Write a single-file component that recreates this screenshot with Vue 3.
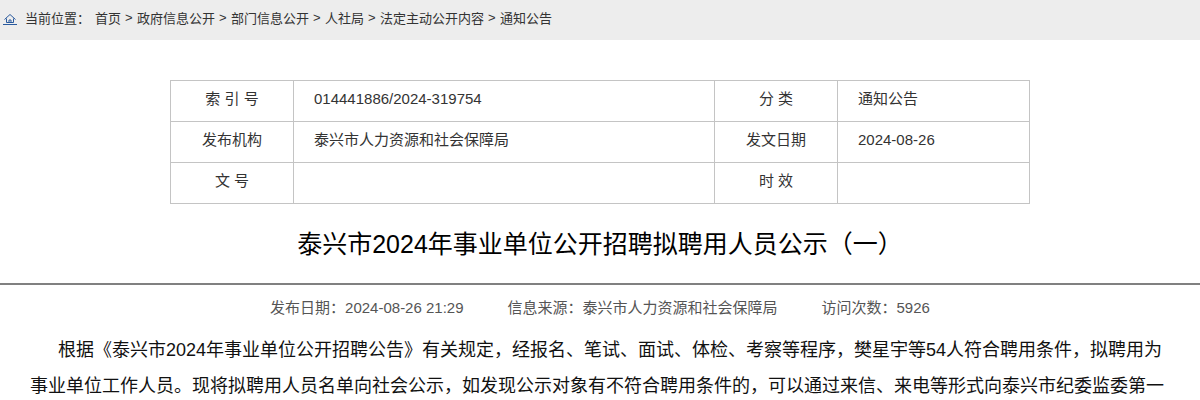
<template>
  <div class="page">
    <div class="crumb">
      <svg class="home" width="14" height="12" viewBox="0 0 14 12" fill="none" stroke="#2a5a9e" stroke-width="1">
        <path d="M1.5 6.5 7 1.5l5.5 5" />
        <path d="M3.5 5.5v4h7v-4" />
        <path d="M6 9.5V7h2v2.5" />
        <path d="M0 11.5h14" />
      </svg>
      <span class="here">当前位置：</span>
      <template v-for="(item, i) in crumbs" :key="item">
        <span v-if="i > 0" class="sep">&gt;</span>
        <span>{{ item }}</span>
      </template>
    </div>

    <div class="meta">
      <template v-for="row in metaRows" :key="row[0]">
        <div class="cell label">{{ row[0] }}</div>
        <div class="cell">{{ row[1] }}</div>
        <div class="cell label">{{ row[2] }}</div>
        <div class="cell">{{ row[3] }}</div>
      </template>
    </div>

    <h1 class="title">泰兴市2024年事业单位公开招聘拟聘用人员公示（一）</h1>

    <div class="info">
      <span>发布日期：2024-08-26 21:29</span>
      <span>信息来源：泰兴市人力资源和社会保障局</span>
      <span>访问次数：5926</span>
    </div>

    <div class="article">
      <p>根据《泰兴市2024年事业单位公开招聘公告》有关规定，经报名、笔试、面试、体检、考察等程序，樊星宇等54人符合聘用条件，拟聘用为事业单位工作人员。现将拟聘用人员名单向社会公示，如发现公示对象有不符合聘用条件的，可以通过来信、来电等形式向泰兴市纪委监委第一</p>
    </div>
  </div>
</template>

<script setup>
const crumbs = ['首页', '政府信息公开', '部门信息公开', '人社局', '法定主动公开内容', '通知公告']

const metaRows = [
  ['索 引 号', '014441886/2024-319754', '分 类', '通知公告'],
  ['发布机构', '泰兴市人力资源和社会保障局', '发文日期', '2024-08-26'],
  ['文 号', '', '时 效', '']
]
</script>

<style>
body {
  overflow: hidden;
}
</style>

<style scoped>
.page {
  width: 1200px;
  height: 400px;
  overflow: hidden;
  background: #fff;
  font-family: "Liberation Sans", "Noto Sans CJK SC", sans-serif;
  color: #333;
}

.crumb {
  display: flex;
  align-items: center;
  height: 40px;
  padding-left: 3px;
  padding-bottom: 5px;
  box-sizing: border-box;
  background: #ededed;
  font-size: 13px;
}

.home {
  margin-right: 8px;
  margin-top: 3px;
}

.here {
  margin-right: 5px;
}

.sep {
  margin: 0 4.4px 0 4px;
}

.meta {
  display: grid;
  grid-template-columns: 123px 421px 123px 192px;
  width: 860px;
  box-sizing: border-box;
  margin: 40px auto 0;
  border-top: 1px solid #c4c4c4;
  border-left: 1px solid #c4c4c4;
  font-size: 15px;
}

.cell {
  height: 41px;
  line-height: 36px;
  box-sizing: border-box;
  padding-left: 20px;
  border-right: 1px solid #c4c4c4;
  border-bottom: 1px solid #c4c4c4;
}

.label {
  padding-left: 0;
  text-align: center;
}

.title {
  margin: 22px 0 0;
  font-size: 25px;
  font-weight: normal;
  line-height: 36px;
  text-align: center;
  color: #000;
}

.info {
  display: flex;
  justify-content: center;
  gap: 44px;
  margin-top: 21px;
  padding-top: 13px;
  border-top: 2px solid #808080;
  font-size: 15px;
  line-height: 20px;
  color: #555;
}

.article {
  margin-top: 14px;
  padding: 0 30px;
  font-size: 18px;
  line-height: 36px;
  color: #111;
}

.article p {
  margin: 0;
  text-indent: 28px;
}
</style>
